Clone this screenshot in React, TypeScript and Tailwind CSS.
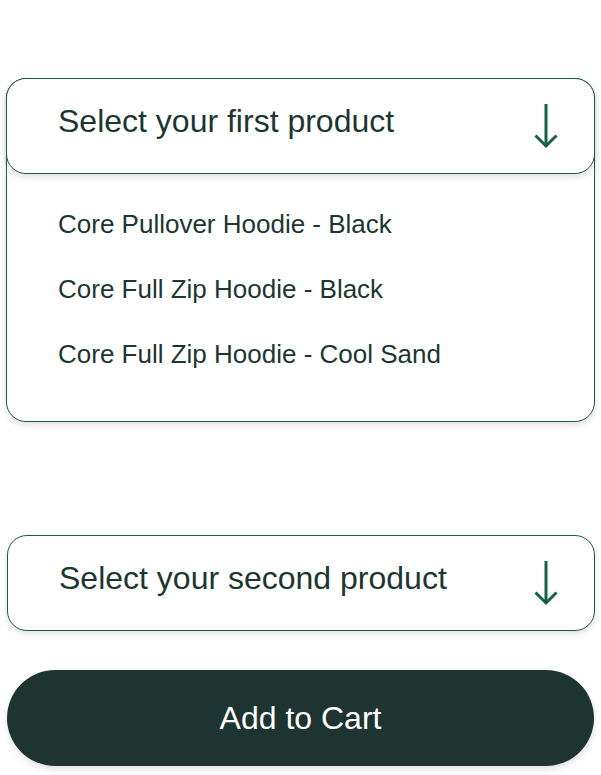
import { useState } from 'react'

const FIRST_OPTIONS = [
  'Core Pullover Hoodie - Black',
  'Core Full Zip Hoodie - Black',
  'Core Full Zip Hoodie - Cool Sand',
]

function DownArrow() {
  return (
    <svg width="26" height="46" viewBox="0 0 26 46" fill="none" stroke="#17604a" strokeWidth="3" strokeLinecap="butt">
      <path d="M13 1v42" />
      <path d="M2.5 32.5 13 43l10.5-10.5" />
    </svg>
  )
}

function SelectHeader({ label }: { label: string }) {
  return (
    <div className="flex h-[96px] items-center justify-between rounded-[20px] border border-[#1a5c46] bg-white pl-[51px] pr-[35px] shadow-[0_3px_6px_rgba(0,0,0,0.12)]">
      <span className="mb-[10px] text-[32px] leading-none text-[#1c3631]">{label}</span>
      <DownArrow />
    </div>
  )
}

export default function App() {
  const [open] = useState(true)

  return (
    <div
      className="min-h-[775px] w-full bg-white px-[6px] pt-[78px]"
      style={{ fontFamily: '"Liberation Sans", Arial, sans-serif' }}
    >
      <div className="rounded-[20px] border border-[#1a5c46] bg-white shadow-[0_3px_6px_rgba(0,0,0,0.12)]">
        <div className="-m-px">
          <SelectHeader label="Select your first product" />
        </div>
        {open && (
          <ul className="flex flex-col gap-[39px] pb-[54px] pl-[51px] pt-[38px]">
            {FIRST_OPTIONS.map((o) => (
              <li key={o} className="text-[26px] leading-[26px] text-[#1c3631]">
                {o}
              </li>
            ))}
          </ul>
        )}
      </div>

      <div className="mt-[113px] pl-px">
        <SelectHeader label="Select your second product" />
      </div>

      <button className="mt-[39px] ml-px flex h-[96px] w-[587px] items-center justify-center rounded-full bg-[#1d3431] text-[32px] text-white shadow-[0_3px_6px_rgba(0,0,0,0.12)]">
        Add to Cart
      </button>
    </div>
  )
}
